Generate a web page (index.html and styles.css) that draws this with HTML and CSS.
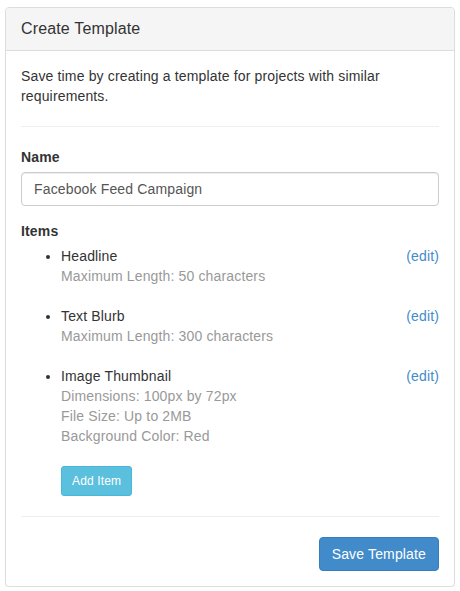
FILE: index.html
```html
<!DOCTYPE html>
<html>
<head>
<meta charset="utf-8">
<link rel="stylesheet" href="styles.css">
</head>
<body>
<div class="panel">
  <div class="panel-heading">
    <h3 class="panel-title">Create Template</h3>
  </div>
  <div class="panel-body">
    <p class="intro">Save time by creating a template for projects with similar requirements.</p>
    <hr class="divider">
    <div class="form-group">
      <label class="field-label" for="name">Name</label>
      <input class="form-control" id="name" type="text" value="Facebook Feed Campaign">
    </div>
    <div class="items">
      <div class="field-label">Items</div>
      <ul class="item-list">
        <li class="item">
          <a class="edit" href="#">(edit)</a>
          <div class="item-name">Headline</div>
          <div class="item-meta">Maximum Length: 50 characters</div>
        </li>
        <li class="item">
          <a class="edit" href="#">(edit)</a>
          <div class="item-name">Text Blurb</div>
          <div class="item-meta">Maximum Length: 300 characters</div>
        </li>
        <li class="item">
          <a class="edit" href="#">(edit)</a>
          <div class="item-name">Image Thumbnail</div>
          <div class="item-meta">Dimensions: 100px by 72px</div>
          <div class="item-meta">File Size: Up to 2MB</div>
          <div class="item-meta">Background Color: Red</div>
        </li>
      </ul>
      <div class="add-row">
        <button class="btn btn-sm btn-info" type="button">Add Item</button>
      </div>
    </div>
    <hr class="divider">
    <div class="actions">
      <button class="btn btn-primary" type="button">Save Template</button>
    </div>
  </div>
</div>
</body>
</html>
```

FILE: styles.css
```css
* { box-sizing: border-box; }

html, body {
  margin: 0;
  background: #fff;
}

body {
  padding: 7px 5px 0 5px;
  font-family: "Liberation Sans", Arial, Helvetica, sans-serif;
  font-size: 14px;
  line-height: 20px;
  letter-spacing: 0.15px;
  color: #333;
}

.panel {
  width: 450px;
  background: #fff;
  border: 1px solid #ddd;
  border-radius: 4px;
  box-shadow: 0 1px 1px rgba(0, 0, 0, 0.05);
}

.panel-heading {
  background: #f5f5f5;
  border-bottom: 1px solid #ddd;
  border-radius: 3px 3px 0 0;
  padding: 10px 15px;
}

.panel-title {
  margin: 0;
  font-size: 16px;
  font-weight: normal;
  line-height: 22px;
  color: #333;
}

.panel-body {
  padding: 15px;
}

.intro {
  margin: 0;
}

.divider {
  margin: 20px 0;
  border: 0;
  border-top: 1px solid #eee;
  height: 0;
}

.form-group {
  margin-bottom: 15px;
}

.field-label {
  display: block;
  font-weight: bold;
  margin-bottom: 5px;
}

.form-control {
  display: block;
  width: 100%;
  height: 34px;
  padding: 6px 12px;
  font-family: inherit;
  font-size: 14px;
  line-height: 20px;
  letter-spacing: 0.15px;
  color: #555;
  background: #fff;
  border: 1px solid #ccc;
  border-radius: 4px;
  box-shadow: inset 0 1px 1px rgba(0, 0, 0, 0.075);
  outline: none;
}

.item-list {
  margin: 0;
  padding-left: 40px;
}

.item {
  margin-bottom: 20px;
}

.edit {
  float: right;
  color: #428bca;
  text-decoration: none;
}

.item-meta {
  color: #999;
}

.add-row {
  padding-left: 40px;
}

.btn {
  display: inline-block;
  font-family: inherit;
  font-weight: normal;
  letter-spacing: 0.15px;
  text-align: center;
  white-space: nowrap;
  border: 1px solid transparent;
  border-radius: 4px;
  cursor: pointer;
  color: #fff;
}

.btn-sm {
  padding: 5px 10px;
  font-size: 12px;
  line-height: 18px;
  border-radius: 3px;
}

.btn-info {
  background: #5bc0de;
  border-color: #46b8da;
}

.btn-primary {
  padding: 6px 12px;
  font-size: 14px;
  line-height: 20px;
  background: #428bca;
  border-color: #357ebd;
}

.actions {
  display: flex;
  justify-content: flex-end;
}
```
